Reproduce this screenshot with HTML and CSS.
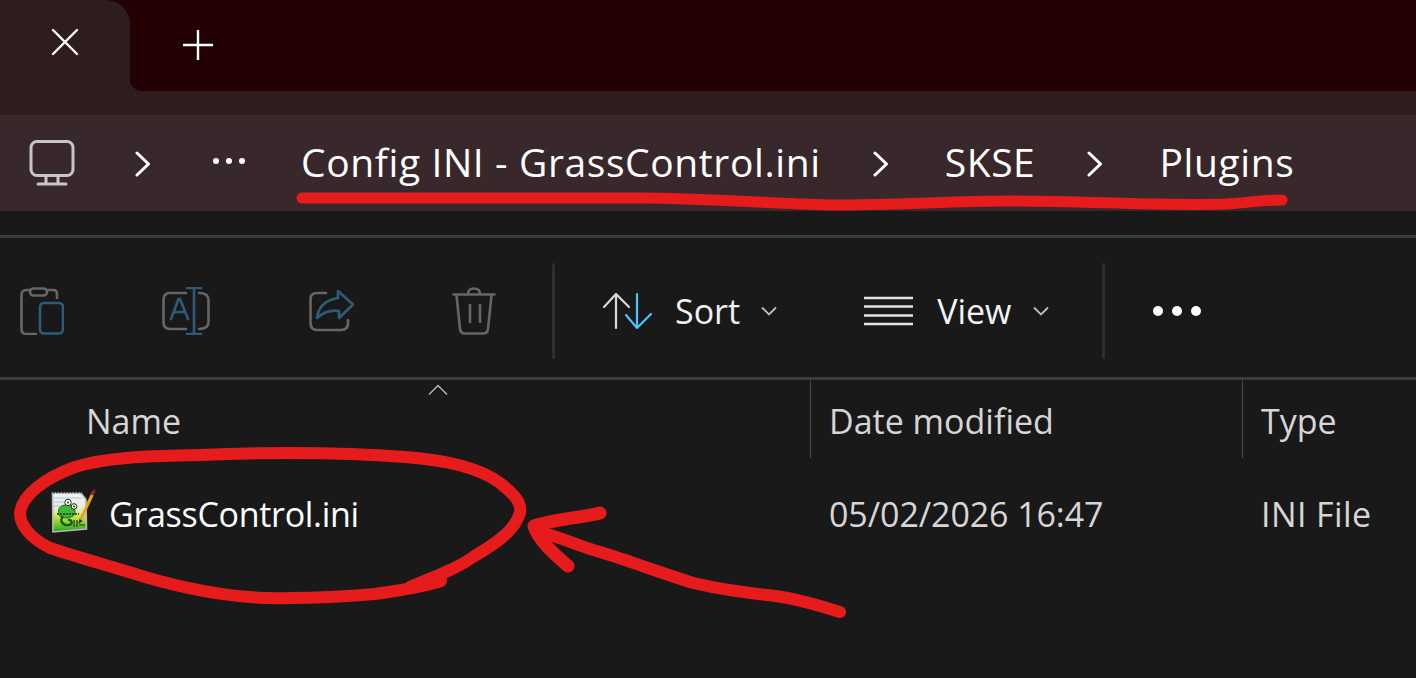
FILE: index.html
```html
<!DOCTYPE html>
<html>
    <head>
        <title>GrassControl.ini - Plugins</title>
        <meta charset="UTF-8">
        <link rel="stylesheet" href="styles.css">
    </head>
    <body>
        <div class="window">
            <div class="tabbar">
                <div class="tab">
                    <svg class="tab-icon" width="28" height="28" viewBox="0 0 28 28"><path d="M2 2L26 26M26 2L2 26" fill="none" stroke="#fff" stroke-width="2.4" stroke-linecap="round"/></svg>
                </div>
                <div class="tabstrip">
                    <svg class="new-tab" width="30" height="30" viewBox="0 0 30 30"><path d="M15 0.5V29.5M0.5 15H29.5" fill="none" stroke="#fff" stroke-width="2.4" stroke-linecap="round"/></svg>
                </div>
            </div>

            <div class="address">
                <svg class="pc-icon" width="46" height="46" viewBox="0 0 46 46">
                    <rect x="2" y="1.5" width="42" height="34" rx="6" fill="none" stroke="#c9c6c6" stroke-width="3"/>
                    <path d="M17 36V44M29 36V44M9 44H37" fill="none" stroke="#c9c6c6" stroke-width="3" stroke-linecap="round"/>
                </svg>
                <svg class="crumb-sep first" width="16" height="26" viewBox="0 0 16 26"><path d="M2 2L13.5 13L2 24" fill="none" stroke="#fff" stroke-width="3" stroke-linecap="round" stroke-linejoin="round"/></svg>
                <div class="crumb-more"><span></span><span></span><span></span></div>
                <span class="crumb">Config INI - GrassControl.ini</span>
                <svg class="crumb-sep" width="16" height="26" viewBox="0 0 16 26"><path d="M2 2L13.5 13L2 24" fill="none" stroke="#fff" stroke-width="3" stroke-linecap="round" stroke-linejoin="round"/></svg>
                <span class="crumb">SKSE</span>
                <svg class="crumb-sep" width="16" height="26" viewBox="0 0 16 26"><path d="M2 2L13.5 13L2 24" fill="none" stroke="#fff" stroke-width="3" stroke-linecap="round" stroke-linejoin="round"/></svg>
                <span class="crumb">Plugins</span>
            </div>

            <div class="toolbar">
                <svg class="tool clip" width="44" height="48" viewBox="0 0 44 48" fill="none" stroke-width="2.6" stroke-linecap="round" stroke-linejoin="round">
                    <path d="M16 47H6Q1.500 47 1.500 42V8Q1.500 3 6 3H10M27 3H33Q37 3 37 7V11" stroke="#666"/>
                    <rect x="10" y="1.500" width="17" height="7" rx="3.500" stroke="#666"/>
                    <rect x="20" y="16" width="23" height="30.500" rx="4" stroke="#2e5c78"/>
                </svg>
                <svg class="tool rename" width="48" height="48" viewBox="0 0 48 48" fill="none" stroke-width="2.6" stroke-linecap="round" stroke-linejoin="round">
                    <path d="M24 6H8Q1.500 6 1.500 13V35Q1.500 42 8 42H24M37 6Q46.500 6 46.500 13V35Q46.500 42 37 42" stroke="#666"/>
                    <path d="M25 1H39M32 1V47M25 47H39M9 32L16.500 12H18L26 32M12 25H23" stroke="#2e5c78"/>
                </svg>
                <svg class="tool share" width="46" height="44" viewBox="0 0 46 44" fill="none" stroke-width="2.6" stroke-linecap="round" stroke-linejoin="round">
                    <path d="M17 4H8Q1.500 4 1.500 10V34Q1.500 41 8 41H32Q39 41 39 34V31" stroke="#666"/>
                    <path d="M29 2L44 15.500L30 29V22Q18 20 8 29Q10 12 29 9Z" stroke="#2e5c78"/>
                </svg>
                <svg class="tool trash" width="44" height="48" viewBox="0 0 44 48" fill="none" stroke="#666" stroke-width="2.6" stroke-linecap="round" stroke-linejoin="round">
                    <path d="M1.500 7.500H42.500M4.500 8L8 42Q8.500 46.500 13 46.500H31Q35.500 46.500 36 42L39.500 8M16 7Q16 1.500 22 1.500Q28 1.500 28 7M18 18V35M28 18V35"/>
                </svg>
                <div class="divider"></div>
                <div class="tool-btn sort">
                    <svg width="50" height="38" viewBox="0 0 50 38" fill="none" stroke-width="2.2" stroke-linecap="round" stroke-linejoin="round">
                        <path d="M14 36V2M2 15L14 2L27 15" stroke="#d9d9d9"/>
                        <path d="M35 2V36M24 23L35 36L49 22" stroke="#4cc2ff"/>
                    </svg>
                    <span class="tool-label">Sort</span>
                    <svg class="caret" width="16" height="10" viewBox="0 0 16 10"><path d="M1 1.500L8 8.500L15 1.500" fill="none" stroke="#bdbdbd" stroke-width="1.8"/></svg>
                </div>
                <div class="tool-btn view">
                    <svg width="50" height="30" viewBox="0 0 50 30" fill="none" stroke="#e2e2e2" stroke-width="2.400"><path d="M0 2H49M0 10.500H49M0 19.500H49M0 28H49"/></svg>
                    <span class="tool-label">View</span>
                    <svg class="caret" width="16" height="10" viewBox="0 0 16 10"><path d="M1 1.500L8 8.500L15 1.500" fill="none" stroke="#bdbdbd" stroke-width="1.8"/></svg>
                </div>
                <div class="divider second"></div>
                <div class="tool-more"><span></span><span></span><span></span></div>
            </div>

            <div class="columns">
                <div class="col col-name">Name
                    <svg class="sort-arrow" width="20" height="12" viewBox="0 0 20 12"><path d="M1 10.500L10 1.500L19 10.500" fill="none" stroke="#b5b5b5" stroke-width="1.500"/></svg>
                </div>
                <div class="col col-date">Date modified</div>
                <div class="col col-type">Type</div>
            </div>

            <div class="file-row">
                <div class="col-name file-name">
                    <svg class="file-icon" width="48" height="48" viewBox="0 0 48 48">
                        <defs>
                            <linearGradient id="page" x1="0" y1="0" x2="0" y2="1">
                                <stop offset="0" stop-color="#f2f5f7"/>
                                <stop offset="0.42" stop-color="#e4ecd0"/>
                                <stop offset="0.6" stop-color="#cde545"/>
                                <stop offset="1" stop-color="#23a31d"/>
                            </linearGradient>
                        </defs>
                        <path d="M2.500 4H31L36 10.500L36.500 40L3 43Z" fill="url(#page)" stroke="#b4b8ba" stroke-width="1.600"/>
                        <path d="M3 3.500H31" stroke="#333" stroke-width="1.500" stroke-dasharray="1.500 1.500"/>
                        <path d="M4 9H32M4 13H14M4 17H10" stroke="#a6c8df" stroke-width="1"/>
                        <path d="M9 26C7 19 11 16 16 16C22 16 26 20 25 25C22 30 11 30 9 26Z" fill="#3dbb35" stroke="#1c6d1f" stroke-width="1"/>
                        <path d="M13 27C9 32 13 37 19 36C23 35 22 30 18 31" fill="none" stroke="#115f18" stroke-width="2.400"/>
                        <circle cx="18" cy="13.500" r="3.200" fill="#fff" stroke="#222" stroke-width="1"/>
                        <circle cx="24" cy="17.500" r="2.800" fill="#fff" stroke="#222" stroke-width="1"/>
                        <circle cx="18" cy="13.500" r="1" fill="#222"/>
                        <circle cx="24" cy="17.500" r="1" fill="#222"/>
                        <path d="M7 25H29" stroke="#26301c" stroke-width="1.600" stroke-dasharray="2 1"/>
                        <path d="M24 31V38M27 31V38M29 36H35" stroke="#26301c" stroke-width="1.200"/>
                        <path d="M30.500 31L43 4" stroke="#e9a31b" stroke-width="3"/>
                        <path d="M42 6L44.500 1" stroke="#7d2a2a" stroke-width="3"/>
                        <path d="M29.500 30L28.500 35L32.500 32Z" fill="#222"/>
                    </svg>
                    <span class="file-title">GrassControl.ini</span>
                </div>
                <div class="col-date file-cell">05/02/2026 16:47</div>
                <div class="col-type file-cell">INI File</div>
            </div>
        </div>

        <!-- red marker scribbles on top of the screenshot -->
        <svg class="scribble" width="1416" height="678" viewBox="0 0 1416 678" fill="none" stroke="#e61c1c" stroke-linecap="round" stroke-linejoin="round">
            <path stroke-width="11" d="M302 198H640C700 198 760 203 830 205C900 205 950 201 1010 201C1090 201 1150 206 1225 204C1245 203 1262 200 1282 200"/>
            <path stroke-width="12" d="M441 581C420 588 400 590 375 594C340 597 320 598 290 598C240 600 190 590 145 577C110 566 80 558 50 548C30 538 20 525 20 513C22 495 45 478 75 467C110 456 160 456 200 455C270 452 340 452 405 457C445 460 480 468 500 483C515 495 522 503 520 513C515 530 497 543 473 557C455 570 435 576 410 587"/>
            <path stroke-width="13" d="M600 513C580 518 555 519 534 526C538 540 555 555 568 566"/>
            <path stroke-width="12" d="M544 533C570 541 585 548 600 552C630 561 655 571 690 582C720 590 750 593 775 596C800 599 820 606 840 612"/>
        </svg>
    </body>
</html>
```

FILE: styles.css
```css
html, body {
    margin: 0;
    padding: 0;
    background: #191919;
}

body {
    position: relative;
    width: 1416px;
    height: 678px;
    overflow: hidden;
    font-family: "Open Sans", "Noto Sans", sans-serif;
    color: #fff;
}

.window {
    display: flex;
    flex-direction: column;
    height: 100%;
}

/* title bar */
.tabbar {
    display: flex;
    height: 115px;
    align-items: flex-start;
    background: linear-gradient(#220003 0, #220003 40px, #2e1c1e 40px);
}

.tab {
    width: 130px;
    height: 115px;
    background: #2e1c1e;
    border-top-right-radius: 24px;
    display: flex;
    justify-content: center;
    padding-top: 28px;
    box-sizing: border-box;
}

.tabstrip {
    flex: 1;
    height: 91px;
    background: #220003;
    border-bottom-left-radius: 12px;
    padding: 30px 0 0 53px;
    box-sizing: border-box;
}

.new-tab {
    display: block;
}

/* address bar */
.address {
    height: 96px;
    background: #38282b;
    display: flex;
    align-items: center;
    padding-left: 29px;
    box-sizing: border-box;
}

.crumb {
    font-size: 39px;
    letter-spacing: 0.6px;
    line-height: 94px;
    margin-bottom: 2px;
}

.crumb-sep {
    margin: 2px 55px 0 0;
    flex: none;
}

.crumb-sep.first {
    margin-left: 60px;
    margin-right: 62px;
}

.crumb-more {
    display: flex;
    gap: 7px;
    margin: 0 56px 0 0;
    padding-bottom: 4px;
}

.crumb-more span {
    width: 6px;
    height: 6px;
    border-radius: 50%;
    background: #fff;
}

.address .crumb + .crumb-sep {
    margin-left: 52px;
    margin-right: 56px;
}

/* command bar */
.toolbar {
    height: 145px;
    margin-top: 24px;
    border-top: 3px solid #3c3c3c;
    border-bottom: 3px solid #3c3c3c;
    background: #191919;
    display: flex;
    align-items: center;
    padding: 6px 0 0 20px;
    box-sizing: border-box;
}

.tool {
    flex: none;
}

.clip {
    margin-right: 98px;
}

.rename {
    margin-right: 99px;
}

.share {
    margin-right: 97px;
}

.trash {
    margin-right: 56px;
}

.divider {
    width: 3px;
    height: 96px;
    background: #2f2f2f;
    border-radius: 2px;
}

.tool-btn {
    display: flex;
    align-items: center;
}

.sort {
    margin-left: 47px;
}

.view {
    margin-left: 87px;
}

.tool-label {
    margin-left: 23px;
    font-size: 34px;
    color: #f2f2f2;
}

.caret {
    margin-left: 21px;
}

.view .caret {
    margin-left: 22px;
}

.second {
    margin-left: 53px;
}

.tool-more {
    display: flex;
    gap: 9px;
    margin-left: 48px;
}

.tool-more span {
    width: 10px;
    height: 10px;
    border-radius: 50%;
    background: #fff;
}

/* details list */
.columns {
    display: flex;
    height: 78px;
}

.col {
    position: relative;
    font-size: 34px;
    line-height: 82px;
    color: #d6d6d6;
    box-sizing: border-box;
}

.col-name {
    width: 810px;
    padding-left: 86px;
    box-sizing: border-box;
}

.col-date {
    width: 432px;
    padding-left: 18px;
    border-left: 1px solid #4a4a4a;
    box-sizing: border-box;
}

.col-type {
    padding-left: 18px;
    border-left: 1px solid #4a4a4a;
    flex: 1;
}

.sort-arrow {
    position: absolute;
    left: 428px;
    top: 4px;
}

.file-row {
    display: flex;
    margin-top: 23px;
    height: 66px;
    align-items: center;
    font-size: 34px;
}

.file-name {
    display: flex;
    align-items: center;
    padding-left: 50px;
}

.file-icon {
    flex: none;
    margin-top: -2px;
}

.file-title {
    margin-left: 11px;
    letter-spacing: -0.3px;
}

.file-cell {
    color: #d6d6d6;
    letter-spacing: -0.1px;
    border-left: 1px solid transparent;
}

.file-row .col-date {
    padding-left: 18px;
}

.file-row .col-type {
    border-left: 0;
    padding-left: 19px;
    letter-spacing: 0.4px;
}

/* marker layer */
.scribble {
    position: absolute;
    left: 0;
    top: 0;
}
```
